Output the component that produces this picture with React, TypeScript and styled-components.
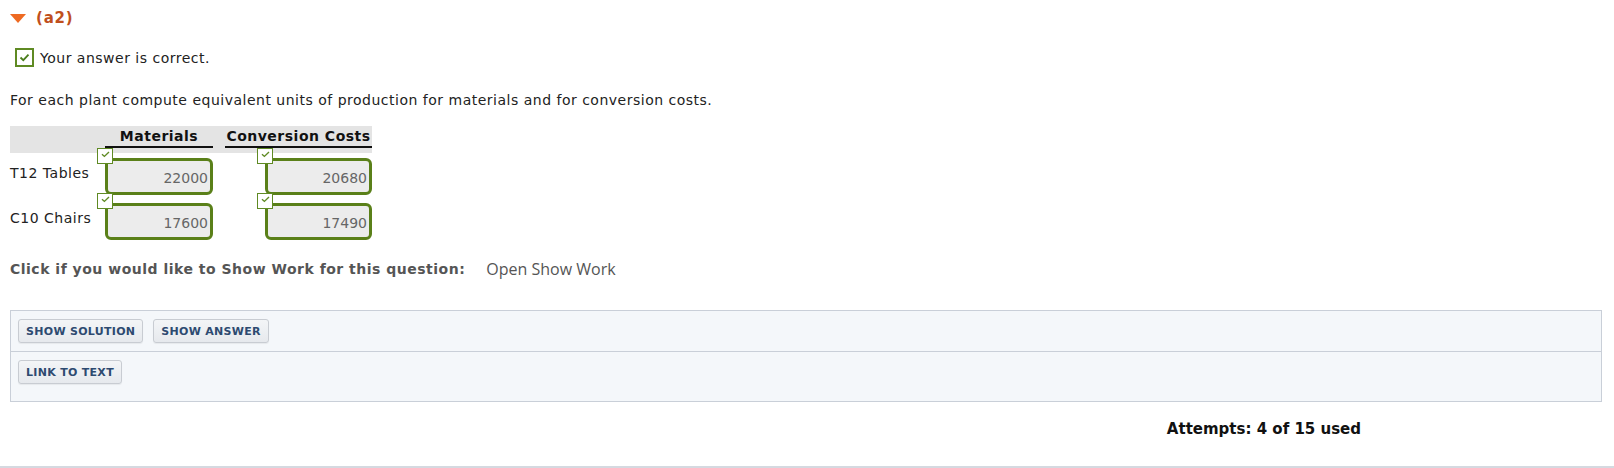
import React from "react";
import styled, { createGlobalStyle } from "styled-components";

const Global = createGlobalStyle`
  html, body { margin: 0; padding: 0; background: #fff; }
  body { font-family: Verdana, "DejaVu Sans", sans-serif; color: #222; }
`;

const Page = styled.div`
  width: 1614px;
  height: 468px;
  box-sizing: border-box;
  border-bottom: 2px solid #d5d9e0;
  display: flex;
  flex-direction: column;
`;

const Content = styled.div`
  padding: 0 12px 0 10px;
  display: flex;
  flex-direction: column;
`;

const TitleRow = styled.div`
  display: flex;
  align-items: center;
  gap: 10px;
  height: 20px;
  margin-top: 8px;
  color: #c04f1c;
  font-weight: bold;
  font-size: 15px;
  letter-spacing: 0.8px;
`;

const Triangle = styled.span`
  width: 0;
  height: 0;
  border-left: 8px solid transparent;
  border-right: 8px solid transparent;
  border-top: 9px solid #ee6a22;
  margin-top: 1px;
`;

const StatusRow = styled.div`
  display: flex;
  align-items: center;
  gap: 6px;
  margin-top: 20px;
  margin-left: 5px;
  font-size: 14px;
  letter-spacing: 0.5px;
  height: 19px;
`;

const Check = styled.span<{ $size: number }>`
  box-sizing: border-box;
  width: ${(p) => p.$size}px;
  height: ${(p) => p.$size}px;
  border: ${(p) => (p.$size > 17 ? 2 : 1)}px solid #5f8a23;
  background: #fff;
  display: inline-flex;
  align-items: ${(p) => (p.$size > 17 ? "center" : "flex-start")};
  justify-content: center;
  flex: none;
  svg { display: block; }
`;

const CheckMark = ({ size }: { size: number }) => (
  <Check $size={size}>
    {size > 17 ? (
      <svg width="11" height="9" viewBox="0 0 11 9">
        <path d="M1.5 4.5 L4.3 7.2 L9.5 1.6" stroke="#4a7d1c" strokeWidth="1.8" fill="none" />
      </svg>
    ) : (
      <svg width="9" height="7" viewBox="0 0 9 7" style={{ marginTop: 2 }}>
        <path d="M1 3.2 L3.4 5.4 L8 1" stroke="#5f8a23" strokeWidth="1.4" fill="none" />
      </svg>
    )}
  </Check>
);

const Question = styled.p`
  margin: 24px 0 0 0;
  font-size: 14px;
  letter-spacing: 0.5px;
  line-height: 18px;
`;

const Table = styled.div`
  margin-top: 17px;
  display: grid;
  grid-template-columns: 95px 108px 12px 147px;
  width: 362px;
`;

const HeaderRow = styled.div`
  grid-column: 1 / -1;
  display: grid;
  grid-template-columns: 95px 108px 12px 147px;
  background: #e4e4e4;
  height: 27px;
`;

const HeaderCell = styled.div<{ $col: number }>`
  grid-column: ${(p) => p.$col};
  height: 20px;
  border-bottom: 2px solid #111;
  font-weight: bold;
  font-size: 14px;
  letter-spacing: 0.5px;
  line-height: 20px;
  text-align: center;
  color: #111;
`;

const RowLabel = styled.div`
  grid-column: 1;
  font-size: 14px;
  letter-spacing: 0.5px;
  display: flex;
  align-items: center;
  height: 45px;
  padding-bottom: 5px;
  box-sizing: border-box;
`;

const Cell = styled.div<{ $col: number }>`
  grid-column: ${(p) => p.$col};
  display: flex;
  justify-content: flex-end;
  align-items: flex-start;
  height: 45px;
  padding-top: 5px;
  box-sizing: border-box;
`;

const InputWrap = styled.div`
  position: relative;
`;

const Badge = styled.div`
  position: absolute;
  left: -8px;
  top: -10px;
  display: flex;
`;

const NumBox = styled.div<{ $w: number }>`
  box-sizing: border-box;
  width: ${(p) => p.$w}px;
  height: 37px;
  border: 3px solid #5a8019;
  border-radius: 6px;
  background: #ececec;
  color: #666;
  font-size: 14px;
  text-align: right;
  padding: 8px 2px 0 0;
  line-height: 18px;
`;

const ShowWork = styled.div`
  margin-top: 16px;
  display: flex;
  align-items: center;
  gap: 21px;
  height: 20px;
`;

const ShowWorkLabel = styled.span`
  font-weight: bold;
  font-size: 14px;
  letter-spacing: 0.5px;
  color: #555;
`;

const ShowWorkLink = styled.span`
  font-family: "Open Sans", "Liberation Sans", sans-serif;
  font-size: 16px;
  color: #555;
`;

const Panel = styled.div`
  margin-top: 31px;
  border: 1px solid #c9cfd8;
  background: #f4f7fa;
  display: flex;
  flex-direction: column;
`;

const PanelRow = styled.div<{ $last?: boolean }>`
  display: flex;
  gap: 10px;
  padding: 8px 7px ${(p) => (p.$last ? 17 : 8)}px 7px;
  border-top: ${(p) => (p.$last ? "1px solid #c9cfd8" : "none")};
`;

const Btn = styled.button`
  height: 24px;
  box-sizing: border-box;
  padding: 0 7px;
  border: 1px solid #c8ccd2;
  border-radius: 3px;
  background: linear-gradient(#f3f5f7, #e6e9ed);
  box-shadow: 0 1px 1px rgba(0, 0, 0, 0.06);
  font-family: Verdana, "DejaVu Sans", sans-serif;
  font-weight: bold;
  font-size: 11px;
  color: #2d4a70;
  letter-spacing: 0.3px;
`;

const AttemptsRow = styled.div`
  display: flex;
  justify-content: flex-end;
  padding-right: 253px;
  margin-top: 18px;
  font-weight: bold;
  font-size: 15px;
  color: #111;
`;

const rows = [
  { label: "T12 Tables", m: "22000", c: "20680" },
  { label: "C10 Chairs", m: "17600", c: "17490" },
];

export default function App() {
  return (
    <Page>
      <Global />
      <Content>
        <TitleRow>
          <Triangle />
          <span>(a2)</span>
        </TitleRow>
        <StatusRow>
          <CheckMark size={19} />
          <span>Your answer is correct.</span>
        </StatusRow>
        <Question>
          For each plant compute equivalent units of production for materials and for conversion costs.
        </Question>
        <Table>
          <HeaderRow>
            <HeaderCell $col={2}>Materials</HeaderCell>
            <HeaderCell $col={4}>Conversion Costs</HeaderCell>
          </HeaderRow>
          {rows.map((r) => (
            <React.Fragment key={r.label}>
              <RowLabel>{r.label}</RowLabel>
              <Cell $col={2}>
                <InputWrap>
                  <Badge>
                    <CheckMark size={16} />
                  </Badge>
                  <NumBox $w={108}>{r.m}</NumBox>
                </InputWrap>
              </Cell>
              <Cell $col={4}>
                <InputWrap>
                  <Badge>
                    <CheckMark size={16} />
                  </Badge>
                  <NumBox $w={107}>{r.c}</NumBox>
                </InputWrap>
              </Cell>
            </React.Fragment>
          ))}
        </Table>
        <ShowWork>
          <ShowWorkLabel>Click if you would like to Show Work for this question:</ShowWorkLabel>
          <ShowWorkLink>Open Show Work</ShowWorkLink>
        </ShowWork>
        <Panel>
          <PanelRow>
            <Btn>SHOW SOLUTION</Btn>
            <Btn>SHOW ANSWER</Btn>
          </PanelRow>
          <PanelRow $last>
            <Btn>LINK TO TEXT</Btn>
          </PanelRow>
        </Panel>
      </Content>
      <AttemptsRow>Attempts: 4 of 15 used</AttemptsRow>
    </Page>
  );
}
